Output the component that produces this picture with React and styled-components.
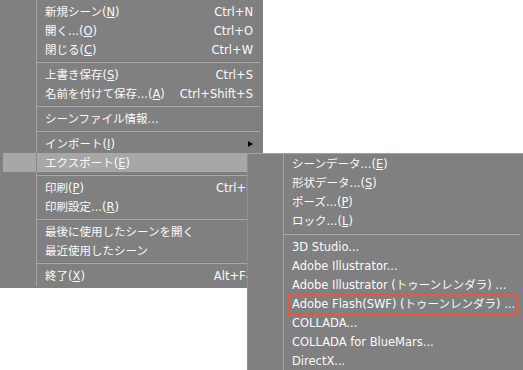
import React from "react";
import styled, { createGlobalStyle, css } from "styled-components";

const Global = createGlobalStyle`
  html, body { margin: 0; padding: 0; background: #ffffff; overflow: hidden; }
  body { font-family: "DejaVu Sans", "Noto Sans CJK JP", sans-serif; }
`;

const Stage = styled.div`
  position: relative;
  width: 523px;
  height: 370px;
`;

const Menu = styled.div`
  position: relative;
  background: #808080;
  color: #fafafa;
  font-size: 11.5px;
  box-sizing: border-box;
  display: flex;
  flex-direction: column;
  &::before {
    content: "";
    position: absolute;
    top: 0;
    bottom: ${(p) => (p.$sub ? "0" : "2px")};
    left: ${(p) => p.$gutter}px;
    width: 1px;
    background: #a4a4a4;
    z-index: 2;
  }
`;

const MainMenu = styled(Menu)`
  width: 263px;
  padding: 2px 0 3px 0;
`;

const SubMenu = styled(Menu)`
  position: absolute;
  left: 247px;
  top: 153px;
  width: 276px;
  height: 217px;
  border-top: 1px solid #a2a2a2;
  border-left: 1px solid #8e8e8e;
  overflow: hidden;
`;

const Row = styled.div`
  position: relative;
  height: 19px;
  box-sizing: border-box;
  padding-top: 2px;
  line-height: 17px;
  display: flex;
  align-items: center;
  justify-content: space-between;
  padding-left: ${(p) => p.$pad}px;
  padding-right: 10px;
  white-space: nowrap;
  ${(p) =>
    p.$active &&
    css`
      margin-left: 3px;
      padding-left: ${p.$pad - 3}px;
      background: #a7a7a7;
      &::before {
        content: "";
        position: absolute;
        left: 33px;
        top: 0;
        bottom: 0;
        width: 1px;
        background: #8a8a8a;
        z-index: 3;
      }
    `}
  ${(p) =>
    p.$marked &&
    css`
      &::after {
        content: "";
        position: absolute;
        left: 39px;
        right: 5px;
        top: -1px;
        bottom: -3px;
        border: 2px solid #e8573e;
        box-sizing: border-box;
        z-index: 4;
      }
    `}
`;

const Label = styled.span`
  u { text-decoration: underline; text-underline-offset: 1px; }
`;

const Shortcut = styled.span`
  text-align: right;
`;

const Arrow = styled.span`
  width: 0;
  height: 0;
  border-top: 3.5px solid transparent;
  border-bottom: 3.5px solid transparent;
  border-left: 5px solid #000000;
  margin-top: -2px;
`;

const Separator = styled.div`
  height: ${(p) => p.$h}px;
  display: flex;
  align-items: center;
  padding-left: ${(p) => p.$left}px;
  padding-right: ${(p) => p.$right}px;
  &::after {
    content: "";
    flex: 1;
    height: 1px;
    border-top: 1px solid #7a7a7a;
    background: #aaaaaa;
  }
`;

const K = ({ k }) => (
  <>
    (<u>{k}</u>)
  </>
);

const mainItems = [
  { l: <>新規シーン<K k="N" /></>, s: "Ctrl+N" },
  { l: <>開く...<K k="O" /></>, s: "Ctrl+O" },
  { l: <>閉じる<K k="C" /></>, s: "Ctrl+W" },
  "sep",
  { l: <>上書き保存<K k="S" /></>, s: "Ctrl+S" },
  { l: <>名前を付けて保存...<K k="A" /></>, s: "Ctrl+Shift+S" },
  "sep",
  { l: <>シーンファイル情報...</> },
  "sep",
  { l: <>インポート<K k="I" /></>, arrow: true },
  { l: <>エクスポート<K k="E" /></>, active: true },
  "sep",
  { l: <>印刷<K k="P" /></>, s: "Ctrl+P" },
  { l: <>印刷設定...<K k="R" /></> },
  "sep",
  { l: <>最後に使用したシーンを開く</> },
  { l: <>最近使用したシーン</> },
  "sep",
  { l: <>終了<K k="X" /></>, s: "Alt+F4" },
];

const subItems = [
  { l: <>シーンデータ...<K k="E" /></> },
  { l: <>形状データ...<K k="S" /></> },
  { l: <>ポーズ...<K k="P" /></> },
  { l: <>ロック...<K k="L" /></> },
  "sep",
  { l: <>3D Studio...</> },
  { l: <>Adobe Illustrator...</> },
  { l: <>Adobe Illustrator (トゥーンレンダラ) ...</> },
  { l: <>Adobe Flash(SWF) (トゥーンレンダラ) ...</>, marked: true },
  { l: <>COLLADA...</> },
  { l: <>COLLADA for BlueMars...</> },
  { l: <>DirectX...</> },
];

export default function App() {
  return (
    <Stage>
      <Global />
      <MainMenu $gutter={36}>
        {mainItems.map((it, i) =>
          it === "sep" ? (
            <Separator key={i} $h={6} $left={37} $right={3} />
          ) : (
            <Row key={i} $pad={45} $active={it.active}>
              <Label>{it.l}</Label>
              {it.s && <Shortcut>{it.s}</Shortcut>}
              {it.arrow && <Arrow />}
            </Row>
          )
        )}
      </MainMenu>
      <SubMenu $gutter={35} $sub>
        {subItems.map((it, i) =>
          it === "sep" ? (
            <Separator key={i} $h={7} $left={36} $right={3} />
          ) : (
            <Row key={i} $pad={44} $marked={it.marked}>
              <Label>{it.l}</Label>
            </Row>
          )
        )}
      </SubMenu>
    </Stage>
  );
}
